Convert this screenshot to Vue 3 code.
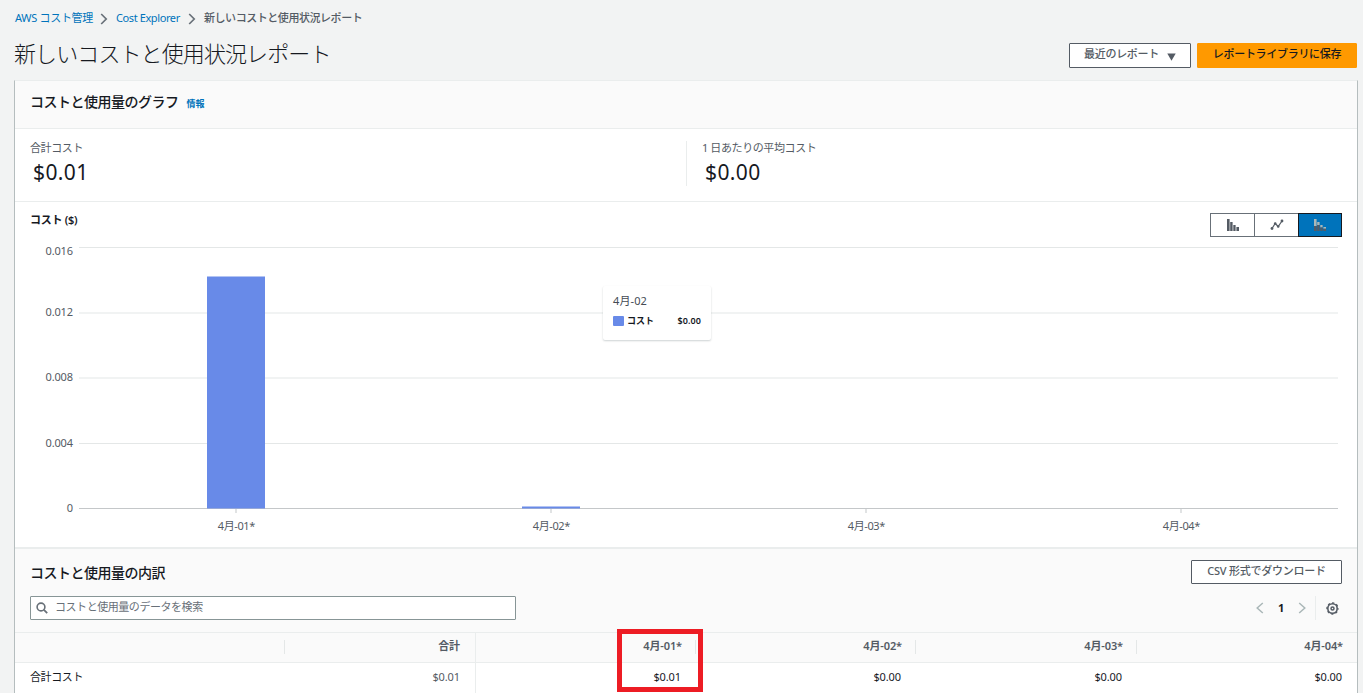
<template>
  <div class="page">
    <nav class="breadcrumb">
      <a class="c1">AWS コスト管理</a>
      <svg class="chevron" viewBox="0 0 8 12"><path d="M1.2 1l5 5-5 5" /></svg>
      <a class="c2">Cost Explorer</a>
      <svg class="chevron" viewBox="0 0 8 12"><path d="M1.2 1l5 5-5 5" /></svg>
      <span class="current">新しいコストと使用状況レポート</span>
    </nav>

    <header class="page-header">
      <h1>新しいコストと使用状況レポート</h1>
      <div class="actions">
        <button class="btn recent">
          <span>最近のレポート</span>
          <svg width="9" height="8" viewBox="0 0 9 8"><path d="M0.3 0.5h8.4L4.5 7.8z" fill="#545b64" /></svg>
        </button>
        <button class="btn primary"><span>レポートライブラリに保存</span></button>
      </div>
    </header>

    <main class="panel">
      <div class="panel-head">
        <h2>コストと使用量のグラフ</h2>
        <a class="info">情報</a>
      </div>

      <div class="stats">
        <div v-for="s in stats" :key="s.label" class="stat">
          <div class="label">{{ s.label }}</div>
          <div class="value">{{ s.value }}</div>
        </div>
      </div>

      <section class="chart-area">
        <div class="chart-head">
          <h3>コスト ($)</h3>
          <div class="toggle">
            <button>
              <svg width="14" height="14" viewBox="0 0 14 14" fill="#545b64">
                <path d="M1 1h2.6v12H1zM4.2 4h2.4v9H4.2zM7.3 7h2.3v6H7.3zM10.4 9h2.6v4h-2.6z" />
              </svg>
            </button>
            <button>
              <svg width="14" height="14" viewBox="0 0 14 14" fill="#545b64">
                <path d="M2 10.5L5.2 5.5L8.2 8.5L12 3" fill="none" stroke="#545b64" stroke-width="1.2" />
                <circle cx="2" cy="10.5" r="1.4" /><circle cx="5.2" cy="5.5" r="1.3" />
                <circle cx="8.2" cy="8.5" r="1.3" /><circle cx="12" cy="3" r="1.4" />
              </svg>
            </button>
            <button class="active">
              <svg width="14" height="14" viewBox="0 0 14 14">
                <path d="M1 1h2.6v7H1zM4.2 4h2.4v3H4.2zM7.3 7h2.3v2.5H7.3zM10.4 9h2.6v1.8h-2.6z" fill="#aab7b8" />
                <path d="M1 8h2.6v5H1zM4.2 7h2.4v6H4.2zM7.3 9.5h2.3V13H7.3zM10.4 10.8h2.6V13h-2.6z" fill="#545b64" />
              </svg>
            </button>
          </div>
        </div>

        <svg class="chart" width="1342" height="309" viewBox="15 238 1342 309">
          <g v-for="t in yTicks" :key="t.label">
            <rect x="79" :y="t.y" width="1259" height="1" :fill="t.label === '0' ? '#c4c7c9' : '#e4e7e7'" />
            <text x="73" :y="t.textY" text-anchor="end" textLength="27.5" v-if="t.label !== '0'">{{ t.label }}</text>
            <text x="73" :y="t.textY" text-anchor="end" v-else>{{ t.label }}</text>
          </g>
          <g v-for="d in days" :key="d.label">
            <rect :x="d.x - 0.5" y="509" width="1" height="4" fill="#c4c7c9" />
            <rect v-if="d.h" :x="d.x - 29" :y="508.5 - d.h" width="58" :height="d.h" fill="#688ae8" />
            <text :x="d.x + 0.5" y="530" text-anchor="middle" textLength="37.5">{{ d.label }}</text>
          </g>
        </svg>

        <div class="tooltip">
          <div class="tip-title">4月-02</div>
          <div class="tip-row">
            <i></i>
            <span>コスト</span>
            <b>$0.00</b>
          </div>
        </div>
      </section>

      <section class="breakdown">
        <div class="breakdown-head">
          <h2>コストと使用量の内訳</h2>
          <button class="btn csv"><span>CSV 形式でダウンロード</span></button>
        </div>
        <div class="tools">
          <div class="search">
            <svg width="12" height="12" viewBox="0 0 12 12" fill="none" stroke="#687078">
              <circle cx="5" cy="5" r="3.9" stroke-width="1.6" />
              <path d="M7.9 7.9l3.3 3.3" stroke-width="1.8" />
            </svg>
            <span>コストと使用量のデータを検索</span>
          </div>
          <div class="pager">
            <svg width="8" height="12" viewBox="0 0 8 12"><path d="M6.8 1L1.2 6l5.6 5" /></svg>
            <b>1</b>
            <svg width="8" height="12" viewBox="0 0 8 12"><path d="M1.2 1l5.6 5-5.6 5" /></svg>
            <div class="gear">
              <svg width="13" height="13" viewBox="0 0 13 13" fill="none" stroke="#545b64">
                <circle cx="6.5" cy="6.5" r="4.7" stroke-width="1.6" />
                <circle cx="6.5" cy="6.5" r="5.6" stroke-width="1.2" stroke-dasharray="2.2 2.198" stroke-dashoffset="1.1" />
                <circle cx="6.5" cy="6.5" r="1.5" stroke-width="1.5" />
              </svg>
            </div>
          </div>
        </div>

        <div class="table">
          <div class="row head">
            <div></div>
            <div>合計</div>
            <div v-for="d in days" :key="d.label">{{ d.label }}</div>
          </div>
          <div class="row">
            <div class="name">合計コスト</div>
            <div class="total">$0.01</div>
            <div v-for="d in days" :key="d.label">{{ d.cost }}</div>
          </div>
          <div class="highlight"></div>
        </div>
      </section>
    </main>
  </div>
</template>

<script setup>
const stats = [
  { label: '合計コスト', value: '$0.01' },
  { label: '1 日あたりの平均コスト', value: '$0.00' }
]

const yTicks = [
  { label: '0.016', y: 247, textY: 255 },
  { label: '0.012', y: 312.5, textY: 316 },
  { label: '0.008', y: 377.5, textY: 381 },
  { label: '0.004', y: 443, textY: 447 },
  { label: '0', y: 508, textY: 512 }
]

const days = [
  { label: '4月-01*', x: 236, h: 232, cost: '$0.01' },
  { label: '4月-02*', x: 551, h: 2, cost: '$0.00' },
  { label: '4月-03*', x: 866, h: 0, cost: '$0.00' },
  { label: '4月-04*', x: 1181, h: 0, cost: '$0.00' }
]
</script>

<style>
body {
  background: #f2f3f3;
  overflow: hidden;
}
</style>

<style scoped>
* {
  box-sizing: border-box;
}

.page {
  height: 693px;
  overflow: hidden;
  padding: 9px 5px 0 14px;
  font-family: 'Noto Sans', 'Noto Sans CJK JP', sans-serif;
  font-size: 11px;
  line-height: 18px;
  letter-spacing: -0.4px;
  color: #16191f;
  white-space: nowrap;
}

h1,
h2,
h3 {
  margin: 0;
}

.breadcrumb {
  display: flex;
  align-items: center;
  height: 18px;
}

.breadcrumb a {
  color: #0073bb;
}

.c1 {
  width: 79px;
  padding-left: 1px;
  letter-spacing: -0.3px;
}

.c2 {
  width: 65px;
  letter-spacing: -0.4px;
}

.chevron {
  width: 8px;
  height: 12px;
  margin: 2px 8px 0 7px;
  fill: none;
  stroke: #687078;
  stroke-width: 1.7;
}

.current {
  font-weight: 500;
  letter-spacing: -0.45px;
  color: #545b64;
}

.page-header {
  display: flex;
  justify-content: space-between;
  height: 53px;
}

h1 {
  padding-top: 10px;
  font-size: 22px;
  font-weight: 300;
  line-height: 32px;
  letter-spacing: -0.9px;
}

.actions {
  display: flex;
  gap: 6px;
  padding-top: 16px;
  margin-right: 1px;
}

.btn {
  display: flex;
  align-items: center;
  justify-content: center;
  height: 25px;
  padding: 0 0 3px;
  border: 1px solid #545b64;
  border-radius: 1px;
  background: #fff;
  color: #545b64;
  font: 500 11px/18px 'Noto Sans', 'Noto Sans CJK JP', sans-serif;
  letter-spacing: -0.3px;
}

.recent {
  width: 122px;
  gap: 8px;
}

.recent svg {
  margin-top: 5px;
}

.primary {
  width: 160px;
  border-color: #ff9900;
  background: #ff9900;
  color: #16191f;
}

.panel {
  height: 620px;
  border: 1px solid #b5bdbe;
  border-top-color: #eaeded;
  background: #fff;
}

.panel-head {
  display: flex;
  align-items: center;
  gap: 8px;
  height: 48px;
  padding: 0 15px 5px;
  border-bottom: 1px solid #eaeded;
  background: #fafafa;
}

h2 {
  font-size: 14px;
  font-weight: 500;
  letter-spacing: -0.5px;
}

.info {
  padding-top: 3px;
  font-size: 9px;
  font-weight: 700;
  letter-spacing: 0;
  color: #0073bb;
}

.stats {
  display: grid;
  grid-template-columns: 671px 671px;
  height: 73px;
  padding-top: 12px;
  border-bottom: 1px solid #eaeded;
}

.stat {
  height: 45px;
  padding-left: 15px;
}

.stat + .stat {
  border-left: 1px solid #eaeded;
}

.label {
  height: 15px;
  line-height: 13px;
  color: #545b64;
}

.value {
  padding-left: 3px;
  font-size: 21px;
  line-height: 32px;
  letter-spacing: 0.4px;
}

.chart-area {
  position: relative;
  height: 345px;
}

.chart-head {
  display: flex;
  justify-content: space-between;
  height: 36px;
  padding: 9px 15px 0;
}

h3 {
  font-size: 11px;
  font-weight: 600;
  line-height: 18px;
  letter-spacing: -0.3px;
}

.toggle {
  display: flex;
  height: 24px;
  margin-top: 2px;
}

.toggle button {
  display: flex;
  align-items: center;
  justify-content: center;
  width: 45px;
  height: 24px;
  padding: 0;
  border: 1px solid #687078;
  background: #fff;
}

.toggle button + button {
  margin-left: -1px;
}

.toggle button.active {
  width: 44px;
  border-color: #16191f;
  background: #0073bb;
}

.chart {
  display: block;
  font-size: 11px;
  letter-spacing: 0;
  fill: #545b64;
}

.tooltip {
  position: absolute;
  left: 588px;
  top: 84px;
  width: 108px;
  height: 54px;
  padding: 6px 10px;
  border-radius: 2px;
  background: #fff;
  box-shadow: 0 1px 2px rgba(0, 28, 36, 0.2);
}

.tip-title {
  letter-spacing: 0.1px;
  line-height: 18px;
  color: #444b54;
}

.tip-row {
  display: flex;
  align-items: center;
  height: 22px;
  font-size: 9px;
  font-weight: 600;
  letter-spacing: 0;
  color: #16191f;
}

.tip-row i {
  width: 11px;
  height: 10px;
  margin-right: 3px;
  border-radius: 1px;
  background: #688ae8;
}

.tip-row b {
  margin-left: auto;
  font-weight: 600;
  letter-spacing: 0.1px;
}

.breakdown {
  border-top: 2px solid #eaeded;
  background: #fafafa;
}

.breakdown-head {
  display: flex;
  justify-content: space-between;
  height: 47px;
  padding: 11px 15px 0;
}

.breakdown-head h2 {
  padding-top: 4px;
}

.csv {
  width: 151px;
  height: 24px;
  padding-bottom: 2px;
  letter-spacing: -0.25px;
}

.tools {
  display: flex;
  justify-content: space-between;
  height: 36px;
  padding: 0 15px;
}

.search {
  display: flex;
  align-items: center;
  gap: 7px;
  width: 486px;
  height: 24px;
  padding: 0 5px;
  border: 1px solid #879596;
  border-radius: 1px;
  background: #fff;
  color: #687078;
  letter-spacing: -0.45px;
}

.search span {
  padding-bottom: 2px;
}

.pager {
  display: flex;
  align-items: center;
  height: 24px;
}

.pager > svg {
  fill: none;
  stroke: #aab7b8;
  stroke-width: 1.5;
}

.pager b {
  width: 34px;
  padding-bottom: 1px;
  text-align: center;
  font-weight: 700;
}

.gear {
  display: flex;
  align-items: center;
  height: 24px;
  margin: 0 3px 0 9px;
  padding-left: 10px;
  border-left: 1px solid #eaeded;
}

.table {
  position: relative;
  border-top: 1px solid #eaeded;
}

.row {
  display: grid;
  grid-template-columns: 270px 191px 220px 220px 221px 220px;
  height: 32px;
  background: #fff;
  letter-spacing: -0.1px;
}

.row > div {
  padding-right: 15px;
  text-align: right;
  line-height: 28px;
}

.row > div:nth-child(2) {
  border-right: 1px solid #eaeded;
}

.row.head {
  height: 30px;
  border-bottom: 1px solid #eaeded;
  background: linear-gradient(#e4e7e7, #e4e7e7) 269px 7px / 1px 14px no-repeat,
    linear-gradient(#e4e7e7, #e4e7e7) 680px 7px / 1px 14px no-repeat,
    linear-gradient(#e4e7e7, #e4e7e7) 900px 7px / 1px 14px no-repeat,
    linear-gradient(#e4e7e7, #e4e7e7) 1121px 7px / 1px 14px no-repeat, #fafafa;
  color: #545b64;
  font-weight: 600;
}

.row.head > div {
  line-height: 26px;
}

.row.head > div:nth-child(n + 3) {
  padding-right: 14px;
}

.row > .name {
  padding-left: 15px;
  text-align: left;
  letter-spacing: -0.4px;
}

.row > .total {
  color: #545b64;
}

/* marks the first day's cost */
.highlight {
  position: absolute;
  left: 602px;
  top: -4px;
  width: 86px;
  height: 63px;
  border: 5px solid #ed1c24;
}
</style>
